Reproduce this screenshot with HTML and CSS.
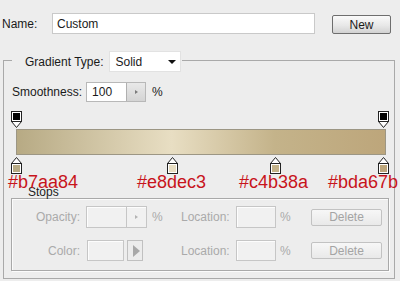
FILE: index.html
```html
<!DOCTYPE html>
<html>
<head>
<meta charset="utf-8">
<link rel="stylesheet" href="styles.css">
</head>
<body>
<div class="name-row">
  <span class="lbl name-lbl">Name:</span>
  <div class="field name-field">Custom</div>
  <div class="btn new-btn">New</div>
</div>
<div class="panel">
  <div class="legend">
    <span class="lbl">Gradient Type:</span>
    <div class="select"><span>Solid</span><span class="caret"></span></div>
  </div>
  <div class="smooth-row">
    <span class="lbl">Smoothness:</span>
    <div class="field spin-field"><span>100</span><span class="spin"><span class="tri"></span></span></div>
    <span class="lbl pct">%</span>
  </div>
  <div class="grad">
    <svg class="stop top-stop s-left" width="11" height="17" viewBox="0 0 11 17"><rect x="0.5" y="0.5" width="10" height="10" fill="#fff" stroke="#222"/><rect x="2" y="2" width="7" height="7" fill="#000"/><polygon points="0.5,10.5 10.5,10.5 5.5,16.5" fill="#fff" stroke="#222"/></svg>
    <svg class="stop top-stop s-right" width="11" height="17" viewBox="0 0 11 17"><rect x="0.5" y="0.5" width="10" height="10" fill="#fff" stroke="#222"/><rect x="2" y="2" width="7" height="7" fill="#000"/><polygon points="0.5,10.5 10.5,10.5 5.5,16.5" fill="#fff" stroke="#222"/></svg>
    <div class="bar"></div>
    <svg class="stop bot-stop s-left" width="11" height="17" viewBox="0 0 11 17"><polygon points="5.5,0.5 10.5,6.5 0.5,6.5" fill="#fff" stroke="#222"/><rect x="0.5" y="6.5" width="10" height="10" fill="#fff" stroke="#222"/><rect x="2" y="8" width="7" height="7" fill="#b7aa84"/></svg>
    <svg class="stop bot-stop s-c2" width="11" height="17" viewBox="0 0 11 17"><polygon points="5.5,0.5 10.5,6.5 0.5,6.5" fill="#fff" stroke="#222"/><rect x="0.5" y="6.5" width="10" height="10" fill="#fff" stroke="#222"/><rect x="2" y="8" width="7" height="7" fill="#e8dec3"/></svg>
    <svg class="stop bot-stop s-c3" width="11" height="17" viewBox="0 0 11 17"><polygon points="5.5,0.5 10.5,6.5 0.5,6.5" fill="#fff" stroke="#222"/><rect x="0.5" y="6.5" width="10" height="10" fill="#fff" stroke="#222"/><rect x="2" y="8" width="7" height="7" fill="#c4b38a"/></svg>
    <svg class="stop bot-stop s-right" width="11" height="17" viewBox="0 0 11 17"><polygon points="5.5,0.5 10.5,6.5 0.5,6.5" fill="#fff" stroke="#222"/><rect x="0.5" y="6.5" width="10" height="10" fill="#fff" stroke="#222"/><rect x="2" y="8" width="7" height="7" fill="#bda67b"/></svg>
  </div>
  <div class="stops">
    <div class="stops-legend">Stops</div>
    <div class="srow r1">
      <span class="dl rgt">Opacity:</span>
      <div class="dfield op-field"><span class="dspin"><span class="dtri"></span></span></div>
      <span class="dl">%</span>
      <span class="dl">Location:</span>
      <div class="dfield loc-field"></div>
      <span class="dl">%</span>
      <div class="dbtn">Delete</div>
    </div>
    <div class="srow r2">
      <span class="dl rgt">Color:</span>
      <div class="color-cell"><div class="dfield col-field"></div><div class="arrow-btn"><span class="play"></span></div></div>
      <span class="dl"></span>
      <span class="dl">Location:</span>
      <div class="dfield loc-field"></div>
      <span class="dl">%</span>
      <div class="dbtn">Delete</div>
    </div>
  </div>
  <div class="hex h1">#b7aa84</div>
  <div class="hex h2">#e8dec3</div>
  <div class="hex h3">#c4b38a</div>
  <div class="hex h4">#bda67b</div>
</div>
</body>
</html>
```
FILE: styles.css
```css
html, body {
  margin: 0;
  padding: 0;
}
body {
  width: 400px;
  height: 281px;
  overflow: hidden;
  background: #ededed;
  font-family: "Liberation Sans", Arial, sans-serif;
  font-size: 12px;
  color: #1a1a1a;
}
.lbl { line-height: 14px; }
.name-row {
  display: flex;
  align-items: center;
  padding: 13px 0 0 2px;
  height: 21px;
}
.name-lbl { width: 50px; }
.field {
  background: #fff;
  border: 1px solid #c9c9c9;
  box-sizing: border-box;
  display: flex;
  align-items: center;
}
.name-field {
  width: 263px;
  height: 21px;
  padding-left: 4px;
}
.btn {
  box-sizing: border-box;
  border: 1px solid #6e6e6e;
  border-radius: 2px;
  background: linear-gradient(#fafafa, #e8e8e8 55%, #d2d2d2);
  display: flex;
  align-items: center;
  justify-content: center;
}
.new-btn {
  margin-left: 17px;
  width: 59px;
  height: 19px;
  margin-top: 2px;
}
.panel {
  position: relative;
  margin: 26px 0 0 3px;
  width: 392px;
  height: 219px;
  box-sizing: border-box;
  border: 1px solid #a9a9a9;
}
.legend {
  display: flex;
  align-items: center;
  width: fit-content;
  margin: -10px 0 0 8px;
  padding: 0 1px 0 13px;
  background: #ededed;
  height: 21px;
}
.select {
  margin-left: 5px;
  width: 72px;
  height: 21px;
  box-sizing: border-box;
  background: #fff;
  border: 1px solid #e2e2e2;
  display: flex;
  align-items: center;
  justify-content: space-between;
  padding: 0 4px 0 6px;
}
.caret {
  width: 0;
  height: 0;
  border-left: 4px solid transparent;
  border-right: 4px solid transparent;
  border-top: 4px solid #111;
}
.smooth-row {
  display: flex;
  align-items: center;
  margin: 10px 0 0 8px;
  height: 20px;
}
.spin-field {
  margin-left: 4px;
  width: 60px;
  height: 20px;
  padding-left: 5px;
  justify-content: space-between;
  border-color: #b8b8b8;
}
.spin {
  width: 18px;
  height: 18px;
  background: linear-gradient(#e9e9e9, #d4d4d4);
  border-left: 1px solid #b0b0b0;
  display: flex;
  align-items: center;
  justify-content: center;
}
.tri {
  width: 0;
  height: 0;
  border-top: 2px solid transparent;
  border-bottom: 2px solid transparent;
  border-left: 3px solid #7a7a7a;
}
.pct { margin-left: 6px; }
.grad {
  position: relative;
  margin-top: 9px;
  height: 62px;
}
.stop { position: absolute; display: block; }
.top-stop { top: 0; }
.bot-stop { top: 46px; }
.s-left { left: 7px; }
.s-c2 { left: 163px; }
.s-c3 { left: 266px; }
.s-right { left: 374px; }
.bar {
  position: absolute;
  left: 12px;
  top: 18px;
  width: 370px;
  height: 26px;
  box-sizing: border-box;
  border: 1px solid #9c9684;
  background: linear-gradient(to right, #b7aa84 0%, #e8dec3 42%, #c4b38a 70%, #bda67b 100%);
}
.stops {
  margin: 25px 0 0 7px;
  width: 378px;
  height: 73px;
  box-sizing: border-box;
  border: 1px solid #a9a9a9;
  box-shadow: 1px 1px 0 #fbfbfb, inset 1px 1px 0 #fbfbfb;
}
.stops-legend {
  margin: -14px 0 0 16px;
  line-height: 14px;
  height: 14px;
  color: #222;
}
.srow {
  display: grid;
  grid-template-columns: 74px 66px 29px 55px 44px 31px 71px;
  align-items: center;
}
.r1 { margin-top: 7px; height: 22px; }
.r2 { margin-top: 12px; height: 21px; }
.dl { color: #aaaaaa; }
.rgt { text-align: right; padding-right: 6px; }
.dfield {
  box-sizing: border-box;
  border: 1px solid #c6c6c6;
  background: #f1f1f1;
  box-shadow: inset 1px 1px 0 #fdfdfd;
}
.op-field {
  width: 61px;
  height: 22px;
  display: flex;
  justify-content: flex-end;
}
.dspin {
  width: 19px;
  height: 20px;
  border-left: 1px solid #c6c6c6;
  display: flex;
  align-items: center;
  justify-content: center;
}
.dtri {
  width: 0;
  height: 0;
  border-top: 2px solid transparent;
  border-bottom: 2px solid transparent;
  border-left: 3px solid #b4b4b4;
}
.loc-field { width: 40px; height: 22px; }
.r2 .loc-field { height: 21px; }
.color-cell { display: flex; margin-left: 1px; }
.col-field { width: 37px; height: 21px; }
.arrow-btn {
  margin-left: 3px;
  width: 16px;
  height: 21px;
  box-sizing: border-box;
  border: 1px solid #c0c0c0;
  background: #ececec;
  display: flex;
  align-items: center;
  justify-content: center;
}
.play {
  width: 0;
  height: 0;
  border-top: 6px solid transparent;
  border-bottom: 6px solid transparent;
  border-left: 7px solid #a8a8a8;
  margin-left: 2px;
}
.dbtn {
  width: 71px;
  height: 17px;
  box-sizing: border-box;
  border: 1px solid #c2c2c2;
  border-radius: 2px;
  background: linear-gradient(#f7f7f7, #e9e9e9);
  color: #a4a4a4;
  display: flex;
  align-items: center;
  justify-content: center;
}
.hex {
  position: absolute;
  top: 112px;
  font-size: 18px;
  line-height: 18px;
  color: #c8141c;
}
.h1 { left: 4px; }
.h2 { left: 133px; }
.h3 { left: 235px; }
.h4 { left: 324px; }
```
